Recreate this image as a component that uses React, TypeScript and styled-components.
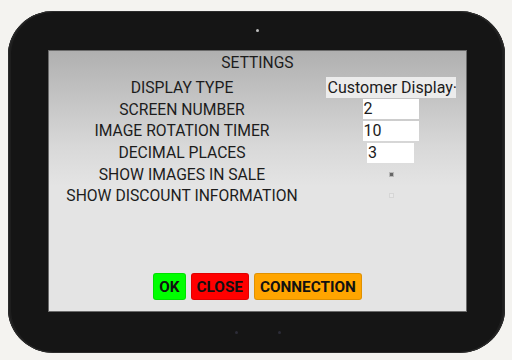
import React, { FC } from "react";
import styled, { createGlobalStyle } from "styled-components";

const GlobalStyle = createGlobalStyle`
  body {
    margin: 0;
    background: #f4f3f0;
    font-family: Roboto, "Liberation Sans", sans-serif;
  }
`;

const Page = styled.div`
  width: 512px;
  height: 360px;
  padding: 11px 7px 7px 8px;
  box-sizing: border-box;
`;

const Tablet = styled.div`
  width: 497px;
  height: 342px;
  background: #151515;
  border-radius: 46px / 44px;
  box-shadow: inset 0 0 0 1px #2c2c2c, inset -3px 0 0 #1e1e1e, inset 3px 0 0 #1e1e1e;
  display: flex;
  flex-direction: column;
  align-items: center;
`;

const Bezel = styled.div<{ $h: number }>`
  height: ${(p) => p.$h}px;
  width: 100%;
  display: flex;
  justify-content: center;
  align-items: center;
  gap: 40px;
  padding-left: 2px;
  box-sizing: border-box;
`;

const Dot = styled.span<{ $light?: boolean }>`
  width: 3px;
  height: 3px;
  border-radius: 50%;
  background: ${(p) => (p.$light ? "#bdbdbd" : "#2c2c38")};
`;

const Screen = styled.div`
  width: 419px;
  height: 262px;
  margin-left: 2px;
  box-sizing: border-box;
  border: 1px solid #6a6a6a;
  background: linear-gradient(to bottom, #b0b0b0 0px, #d8d8d8 95px, #e4e4e4 135px, #e4e4e4 100%);
  display: flex;
  flex-direction: column;
  color: #1c1c1c;
  overflow: hidden;
`;

const Title = styled.div`
  height: 22px;
  margin-top: 1px;
  line-height: 22px;
  text-align: center;
  font-size: 15.6px;
`;

const Form = styled.div`
  display: grid;
  grid-template-columns: 266px 151px;
  grid-auto-rows: 21.6px;
  margin-top: 3px;
`;

const Label = styled.div`
  display: flex;
  align-items: center;
  justify-content: center;
  font-size: 15.7px;
  white-space: nowrap;
`;

const Cell = styled.div`
  display: flex;
  align-items: center;
  justify-content: center;
`;

const Select = styled.div`
  width: 130px;
  height: 21px;
  background: #ececec;
  font-size: 16px;
  line-height: 21px;
  padding-left: 2px;
  box-sizing: border-box;
  white-space: nowrap;
  overflow: hidden;
`;

const Field = styled.div<{ $w: number }>`
  width: ${(p) => p.$w}px;
  height: 20px;
  background: #fff;
  font-size: 16px;
  line-height: 20px;
  padding-left: 1px;
  box-sizing: border-box;
`;

const Check = styled.span<{ $checked?: boolean }>`
  width: 3px;
  height: 3px;
  border: 1px solid ${(p) => (p.$checked ? "#b8b8b8" : "#d6d6d6")};
  background: ${(p) => (p.$checked ? "#666" : "#e8e8e8")};
  margin-left: 1px;
`;

const Spacer = styled.div`
  flex: 1;
`;

const Actions = styled.div`
  display: flex;
  justify-content: center;
  gap: 5px;
  margin-bottom: 11px;
`;

const Button = styled.button<{ $bg: string }>`
  height: 27px;
  padding: 0 5px;
  margin: 0;
  border: 1px solid rgba(0, 0, 0, 0.12);
  border-radius: 3px;
  background: ${(p) => p.$bg};
  color: #111;
  font-family: Roboto, "Liberation Sans", sans-serif;
  font-weight: bold;
  font-size: 15.3px;
`;

interface IRow {
  label: string;
  control: React.ReactNode;
}

const rows: IRow[] = [
  {
    label: "DISPLAY TYPE",
    control: <Select>Customer Display·</Select>,
  },
  { label: "SCREEN NUMBER", control: <Field $w={56}>2</Field> },
  { label: "IMAGE ROTATION TIMER", control: <Field $w={56}>10</Field> },
  { label: "DECIMAL PLACES", control: <Field $w={47}>3</Field> },
  { label: "SHOW IMAGES IN SALE", control: <Check $checked /> },
  { label: "SHOW DISCOUNT INFORMATION", control: <Check /> },
];

const App: FC = () => {
  return (
    <Page>
      <GlobalStyle />
      <Tablet>
        <Bezel $h={39}>
          <Dot $light />
        </Bezel>
        <Screen>
          <Title>SETTINGS</Title>
          <Form>
            {rows.map((row) => (
              <React.Fragment key={row.label}>
                <Label>{row.label}</Label>
                <Cell>{row.control}</Cell>
              </React.Fragment>
            ))}
          </Form>
          <Spacer />
          <Actions>
            <Button $bg="#00ff00">OK</Button>
            <Button $bg="#ff0000">CLOSE</Button>
            <Button $bg="#ffa500">CONNECTION</Button>
          </Actions>
        </Screen>
        <Bezel $h={41}>
          <Dot />
          <Dot />
        </Bezel>
      </Tablet>
    </Page>
  );
};

export default App;
